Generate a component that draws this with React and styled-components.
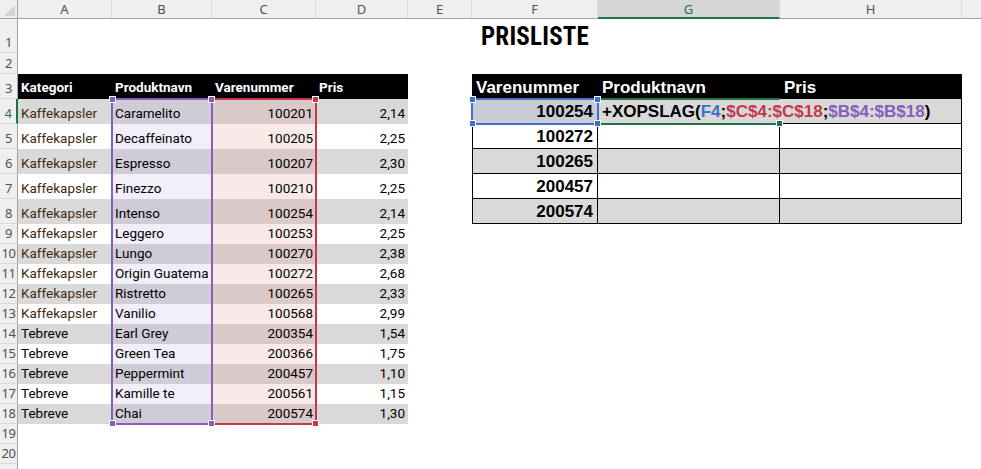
import React from 'react';
import styled, { createGlobalStyle, css } from 'styled-components';

const GlobalStyle = createGlobalStyle`
  html, body { margin: 0; padding: 0; background: #fff; overflow: hidden; }
  * { box-sizing: border-box; }
`;

const COLS = '18px 94px 100px 104px 92px 64px 126px 182px 182px 120px';
const ROWS = '19px 34px 21px ' + '25px '.repeat(6) + '20px '.repeat(13);

const Sheet = styled.div`
  position: relative;
  width: 981px;
  height: 469px;
  overflow: hidden;
`;

const Grid = styled.div`
  display: grid;
  grid-template-columns: ${COLS};
  grid-template-rows: ${ROWS};
`;

const OverlayGrid = styled(Grid)`
  position: absolute;
  inset: 0;
  pointer-events: none;
`;

const Corner = styled.div`
  position: relative;
  background: #efefef;
  border-right: 1px solid #a3a3a3;
  border-bottom: 1px solid #a3a3a3;
  &::after {
    content: '';
    position: absolute;
    right: 2px;
    bottom: 2px;
    border-left: 11px solid transparent;
    border-bottom: 11px solid #d2d2d2;
  }
`;

const ColHead = styled.div`
  background: ${p => (p.$active ? '#d6d6d6' : '#efefef')};
  color: ${p => (p.$active ? '#217346' : '#505050')};
  border-right: 1px solid #d8d8d8;
  border-bottom: ${p => (p.$active ? '2px solid #217346' : '1px solid #a3a3a3')};
  font: 13px 'Noto Sans', 'Open Sans', sans-serif;
  display: flex;
  align-items: center;
  justify-content: center;
  line-height: 1;
  padding-top: 1px;
`;

const RowHead = styled.div`
  background: #efefef;
  color: ${p => (p.$active ? '#217346' : '#505050')};
  border-bottom: 1px solid #d8d8d8;
  border-right: ${p => (p.$active ? '2px solid #217346' : '1px solid #a3a3a3')};
  font: 13px 'Noto Sans', 'Open Sans', sans-serif;
  display: flex;
  align-items: flex-end;
  justify-content: center;
  padding-bottom: 2px;
  line-height: 16px;
  letter-spacing: -0.5px;
`;

const Cell = styled.div`
  background: ${p => p.$bg || '#fff'};
  color: ${p => p.$fg || '#000'};
  display: flex;
  align-items: flex-end;
  justify-content: ${p => (p.$align === 'right' ? 'flex-end' : p.$align === 'center' ? 'center' : 'flex-start')};
  padding: 0 3px 2px 3px;
  white-space: nowrap;
  overflow: ${p => (p.$overflow ? 'visible' : 'hidden')};
  position: relative;
  z-index: ${p => (p.$overflow ? 2 : 0)};
  ${p => p.$kind === 'left' && css`
    font: 13.5px Roboto, 'Noto Sans', sans-serif;
    line-height: 18px;
  `}
  ${p => p.$kind === 'lhead' && css`
    font: bold 13.5px Roboto, 'Noto Sans', sans-serif;
    line-height: 18px;
    padding-bottom: 3px;
  `}
  ${p => p.$kind === 'right' && css`
    font: bold 17px 'Liberation Sans', Arial, sans-serif;
    line-height: 20px;
    padding: 0 4px 1px 4px;
  `}
  ${p => p.$lb && css`border-left: 1px solid #000;`}
  ${p => p.$rb && css`border-right: 1px solid #000;`}
  ${p => p.$bb && css`border-bottom: 1px solid #000;`}
`;

const Title = styled.span`
  font: bold 25px 'Liberation Sans Narrow', 'Roboto Condensed', Roboto, sans-serif;
  font-stretch: condensed;
  line-height: 28px;
  letter-spacing: 0.2px;
`;

const Ref = styled.span`
  color: ${p => p.$c};
`;

const Caret = styled.span`
  display: inline-block;
  width: 1px;
  height: 21px;
  background: #000;
  margin-left: 3px;
  vertical-align: middle;
`;

const RangeBox = styled.div`
  grid-row: ${p => p.$r1} / ${p => p.$r2 + 1};
  grid-column: ${p => p.$c1} / ${p => p.$c2 + 1};
  margin: -1px;
  position: relative;
  z-index: ${p => p.$z || 1};
  border: 2px solid ${p => p.$color};
  ${p => p.$noRight && css`border-right-color: transparent;`}
`;

const Handle = styled.span`
  position: absolute;
  width: 7px;
  height: 7px;
  background: ${p => p.$color};
  border: 1px solid #fff;
  ${p => (p.$v === 't' ? 'top: -4px;' : 'bottom: -4px;')}
  ${p => (p.$h === 'l' ? 'left: -4px;' : 'right: -4px;')}
`;

const LETTERS = ['A', 'B', 'C', 'D', 'E', 'F', 'G', 'H', 'I'];

const leftHeaders = ['Kategori', 'Produktnavn', 'Varenummer', 'Pris'];
const leftData = [
  ['Kaffekapsler', 'Caramelito', '100201', '2,14'],
  ['Kaffekapsler', 'Decaffeinato', '100205', '2,25'],
  ['Kaffekapsler', 'Espresso', '100207', '2,30'],
  ['Kaffekapsler', 'Finezzo', '100210', '2,25'],
  ['Kaffekapsler', 'Intenso', '100254', '2,14'],
  ['Kaffekapsler', 'Leggero', '100253', '2,25'],
  ['Kaffekapsler', 'Lungo', '100270', '2,38'],
  ['Kaffekapsler', 'Origin Guatema', '100272', '2,68'],
  ['Kaffekapsler', 'Ristretto', '100265', '2,33'],
  ['Kaffekapsler', 'Vanilio', '100568', '2,99'],
  ['Tebreve', 'Earl Grey', '200354', '1,54'],
  ['Tebreve', 'Green Tea', '200366', '1,75'],
  ['Tebreve', 'Peppermint', '200457', '1,10'],
  ['Tebreve', 'Kamille te', '200561', '1,15'],
  ['Tebreve', 'Chai', '200574', '1,30'],
];
const rightHeaders = ['Varenummer', 'Produktnavn', 'Pris'];
const rightData = ['100254', '100272', '100265', '200457', '200574'];

const GRAY = '#d9d9d9';
const BLUE = '#3f72c6';
const RED = '#c4384a';
const PURPLE = '#8a5cc0';
const GREEN = '#217346';

const Formula = () => (
  <>
    +XOPSLAG(<Ref $c={BLUE}>F4</Ref>;<Ref $c={RED}>$C$4:$C$18</Ref>;
    <Ref $c={PURPLE}>$B$4:$B$18</Ref>)<Caret />
  </>
);

function cellProps(r, ci) {
  if (r === 1 && ci === 5) return { $align: 'center', children: <Title>PRISLISTE</Title> };
  if (r === 3 && ci <= 3) return { $kind: 'lhead', $bg: '#000', $fg: '#fff', children: leftHeaders[ci] };
  if (r >= 4 && r <= 18 && ci <= 3) {
    const row = leftData[r - 4];
    const shaded = r % 2 === 0;
    let bg = shaded ? GRAY : '#fff';
    if (ci === 1) bg = shaded ? '#cfccd8' : '#f0eef9';
    if (ci === 2) bg = shaded ? '#d9c9c9' : '#f9eaea';
    const fg = ci === 0 && row[0] === 'Kaffekapsler' ? '#3f2c12' : '#000';
    return {
      $kind: 'left',
      $bg: bg,
      $fg: fg,
      $align: ci >= 2 ? 'right' : 'left',
      children: row[ci],
    };
  }
  if (r === 3 && ci >= 5 && ci <= 7) return { $kind: 'right', $bg: '#000', $fg: '#fff', children: rightHeaders[ci - 5] };
  if (r >= 4 && r <= 8 && ci >= 5 && ci <= 7) {
    const shaded = r % 2 === 0;
    const base = {
      $kind: 'right',
      $bg: shaded ? GRAY : '#fff',
      $bb: true,
      $rb: true,
      $lb: ci === 5,
    };
    if (ci === 5) {
      return { ...base, $align: 'right', $bg: r === 4 ? '#c9ccd5' : base.$bg, children: rightData[r - 4] };
    }
    if (r === 4 && ci === 6) return { ...base, $rb: false, $overflow: true, children: <Formula /> };
    return base;
  }
  return {};
}

export default function App() {
  const rows = [];
  for (let r = 1; r <= 21; r++) rows.push(r);
  return (
    <>
      <GlobalStyle />
      <Sheet>
        <Grid>
          <Corner />
          {LETTERS.map(l => (
            <ColHead key={l} $active={l === 'G'}>{l === 'I' ? '' : l}</ColHead>
          ))}
          {rows.map(r => (
            <React.Fragment key={r}>
              <RowHead $active={r === 4}>{r <= 20 ? r : ''}</RowHead>
              {LETTERS.map((l, ci) => (
                <Cell key={l} {...cellProps(r, ci)} />
              ))}
            </React.Fragment>
          ))}
        </Grid>
        <OverlayGrid>
          <RangeBox $r1={5} $r2={19} $c1={4} $c2={4} $color={RED} $z={1}>
            <Handle $color={RED} $v="t" $h="r" />
            <Handle $color={RED} $v="b" $h="r" />
          </RangeBox>
          <RangeBox $r1={5} $r2={19} $c1={3} $c2={3} $color={PURPLE} $z={2}>
            <Handle $color={PURPLE} $v="t" $h="l" />
            <Handle $color={PURPLE} $v="t" $h="r" />
            <Handle $color={PURPLE} $v="b" $h="l" />
            <Handle $color={PURPLE} $v="b" $h="r" />
          </RangeBox>
          <RangeBox $r1={5} $r2={5} $c1={7} $c2={7} $color={BLUE} $z={3}>
            <Handle $color={BLUE} $v="t" $h="l" />
            <Handle $color={BLUE} $v="t" $h="r" />
            <Handle $color={BLUE} $v="b" $h="l" />
            <Handle $color={BLUE} $v="b" $h="r" />
          </RangeBox>
          <RangeBox $r1={5} $r2={5} $c1={8} $c2={8} $color={GREEN} $noRight $z={2}>
            <Handle $color={GREEN} $v="b" $h="r" />
          </RangeBox>
        </OverlayGrid>
      </Sheet>
    </>
  );
}
